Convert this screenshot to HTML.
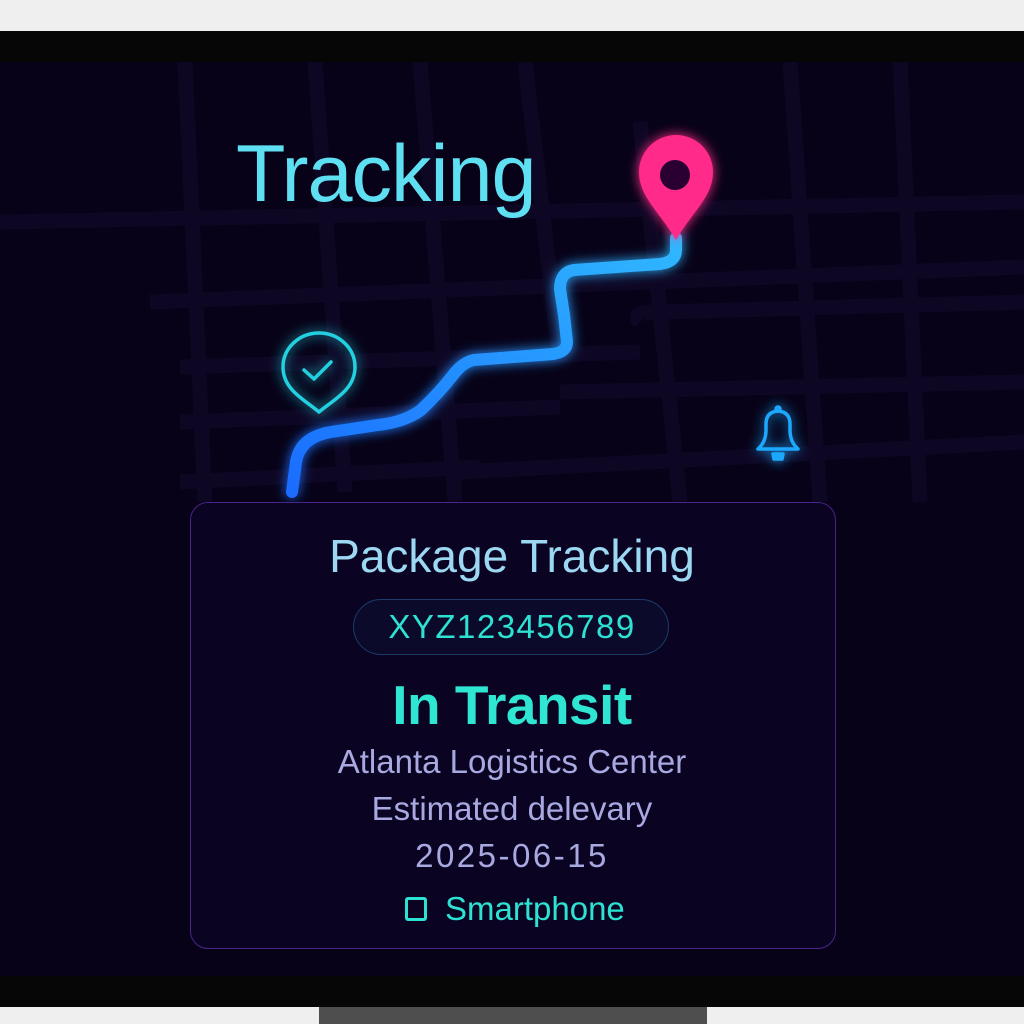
<!DOCTYPE html>
<html><head><meta charset="utf-8"><style>
*{margin:0;padding:0;box-sizing:border-box}
body{width:1024px;height:1024px;background:#efefef;position:relative;overflow:hidden;font-family:"Liberation Sans",sans-serif}
.blk{position:absolute;left:0;width:1024px;background:#060606}
#main{position:absolute;left:0;top:62px;width:1024px;height:914px;background:#070218;overflow:hidden}
.t{position:absolute;left:0;width:1024px;text-align:center;white-space:nowrap}
</style></head><body>
<div class="blk" style="top:31px;height:31px"></div>
<div class="blk" style="top:976px;height:31px"></div>
<div style="position:absolute;left:319px;top:1007px;width:388px;height:17px;background:#4e4e4e"></div>
<div id="main">
<svg width="1024" height="914" style="position:absolute;left:0;top:0">
<defs>
<filter id="g" x="-50%" y="-50%" width="200%" height="200%"><feGaussianBlur stdDeviation="6" result="b"/><feMerge><feMergeNode in="b"/><feMergeNode in="SourceGraphic"/></feMerge></filter>
<linearGradient id="rg" x1="0" y1="1" x2="1" y2="0"><stop offset="0" stop-color="#1a6cff"/><stop offset="1" stop-color="#30b8ff"/></linearGradient>
</defs>
<g stroke="#0e0724" stroke-width="15" fill="none">
<path d="M185 0 L205 440"/><path d="M315 0 L345 430"/><path d="M420 0 L455 440"/><path d="M525 0 L560 300"/><path d="M640 60 L680 440"/><path d="M790 0 L820 440"/><path d="M900 0 L920 440"/>
<path d="M0 160 L1024 140"/><path d="M150 240 L1024 205"/><path d="M180 305 L640 290"/><path d="M640 260 Q630 250 660 250 L1024 240"/><path d="M180 360 L560 345"/><path d="M460 410 L1024 380"/><path d="M180 420 L480 405"/><path d="M560 330 L1024 320"/>
</g>
<path d="M292 430 L296 400 Q300 375 331 370 L378 363 Q405 360 421 348 Q440 330 453 313 Q463 300 474 298 L553 292 Q567 290 567 280 L564 253 L560 227 Q560 210 574 208 L660 202 Q676 200 676 188 L676 176" stroke="url(#rg)" stroke-width="12" fill="none" stroke-linecap="round" filter="url(#g)"/>
<g filter="url(#g)">
<path d="M676 178 C660 150 639 135 639 110 A37 37 0 0 1 713 110 C713 135 692 150 676 178Z" fill="#ff2a8a"/>
<circle cx="675" cy="113" r="15" fill="#2a0630"/>
</g>
<g filter="url(#g)" stroke="#22d0e0" stroke-width="3.5" fill="none" stroke-linecap="round" stroke-linejoin="round">
<path d="M319 350 C305 338 283 328 283 305 A36 34 0 0 1 355 305 C355 328 333 338 319 350Z"/>
<path d="M304 308 L314 317 L331 300"/>
</g>
<g filter="url(#g)" stroke="#1aa8ff" stroke-width="3.5" fill="none" stroke-linejoin="round">
<path d="M758 387 L798 387 Q790 380 790 368 L790 362 Q790 350 778 349 Q766 350 766 362 L766 368 Q766 380 758 387Z"/>
<circle cx="778" cy="347" r="2"/>
<path d="M773 392 L783 392 L782 397 L774 397Z" fill="#1aa8ff"/>
</g>
</svg>
<div style="position:absolute;left:236px;top:66px;font-size:81px;color:#5fe0f2;letter-spacing:-1px">Tracking</div>
<div style="position:absolute;left:190px;top:440px;width:646px;height:447px;border:1.5px solid #4a2488;border-radius:18px;background:#0a0322"></div>
</div>
<div class="t" style="top:529px;font-size:46px;color:#9cd8f2">Package Tracking</div>
<div style="position:absolute;left:353px;top:599px;width:316px;height:56px;border:1.5px solid #1b3c6a;border-radius:28px;background:#0c0a2a"></div>
<div class="t" style="top:608px;font-size:33px;color:#2de2d2;letter-spacing:1.5px">XYZ123456789</div>
<div class="t" style="top:673px;font-size:55px;color:#2ee6d2;font-weight:bold;letter-spacing:-0.5px">In Transit</div>
<div class="t" style="top:743px;font-size:33px;color:#a9a9e2">Atlanta Logistics Center</div>
<div class="t" style="top:790px;font-size:33px;color:#a9a9e2">Estimated delevary</div>
<div class="t" style="top:837px;font-size:33px;color:#a9a9e2;letter-spacing:2.5px">2025-06-15</div>
<div style="position:absolute;left:405px;top:897px;width:22px;height:24px;border:3px solid #2de2d2;border-radius:3px"></div>
<div style="position:absolute;left:445px;top:890px;font-size:33px;color:#2de2d2">Smartphone</div>
</body></html>
